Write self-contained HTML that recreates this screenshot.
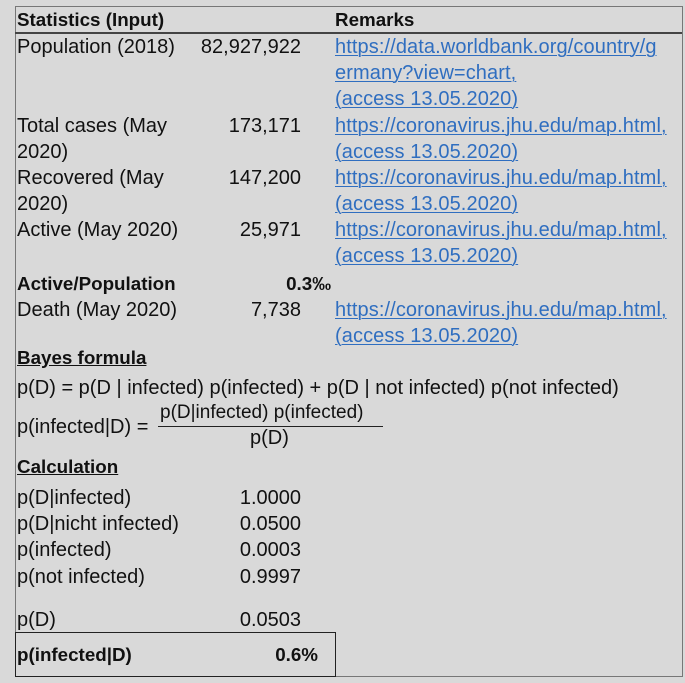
<!DOCTYPE html>
<html><head><meta charset="utf-8"><style>
body{margin:0;width:685px;height:683px;background:#d9d9d9;position:relative;overflow:hidden;font-family:"Liberation Sans",sans-serif;font-size:20px;color:#111;}
.t{position:absolute;line-height:26px;white-space:nowrap;}
.r{text-align:right;}
.l{color:#2f6ec0;text-decoration:underline;text-decoration-thickness:1px;text-underline-offset:2px;letter-spacing:0.1px;}
b{font-weight:bold;}
.bb{font-size:18.8px;font-weight:bold;}
.u{text-decoration:underline;}
</style></head><body>
<div style="position:absolute;left:15px;top:6px;width:666px;height:669px;border:1px solid #777;"></div>
<div style="position:absolute;left:15px;top:32px;width:667px;height:2px;background:#444;"></div>
<div style="position:absolute;left:15px;top:632px;width:319px;height:43px;border:1.5px solid #222;"></div>

<div class="t bb" style="left:17px;top:7px">Statistics (Input)</div>
<div class="t bb" style="left:335px;top:7px">Remarks</div>

<div class="t" style="left:17px;top:34px">Population (2018)</div>
<div class="t r" style="right:384px;top:34px">82,927,922</div>
<div class="t l" style="left:335px;top:34px">https://data.worldbank.org/country/g</div>
<div class="t l" style="left:335px;top:60px">ermany?view=chart,</div>
<div class="t l" style="left:335px;top:86px">(access 13.05.2020)</div>

<div class="t" style="left:17px;top:113px">Total cases (May</div>
<div class="t" style="left:17px;top:139px">2020)</div>
<div class="t r" style="right:384px;top:113px">173,171</div>
<div class="t l" style="left:335px;top:113px">https://coronavirus.jhu.edu/map.html,</div>
<div class="t l" style="left:335px;top:139px">(access 13.05.2020)</div>

<div class="t" style="left:17px;top:165px">Recovered (May</div>
<div class="t" style="left:17px;top:191px">2020)</div>
<div class="t r" style="right:384px;top:165px">147,200</div>
<div class="t l" style="left:335px;top:165px">https://coronavirus.jhu.edu/map.html,</div>
<div class="t l" style="left:335px;top:191px">(access 13.05.2020)</div>

<div class="t" style="left:17px;top:217px">Active (May 2020)</div>
<div class="t r" style="right:384px;top:217px">25,971</div>
<div class="t l" style="left:335px;top:217px">https://coronavirus.jhu.edu/map.html,</div>
<div class="t l" style="left:335px;top:243px">(access 13.05.2020)</div>

<div class="t bb" style="left:17px;top:271px">Active/Population</div>
<div class="t r bb" style="right:354px;top:271px">0.3‰</div>

<div class="t" style="left:17px;top:297px">Death (May 2020)</div>
<div class="t r" style="right:384px;top:297px">7,738</div>
<div class="t l" style="left:335px;top:297px">https://coronavirus.jhu.edu/map.html,</div>
<div class="t l" style="left:335px;top:323px">(access 13.05.2020)</div>

<div class="t u bb" style="left:17px;top:345px">Bayes formula</div>
<div class="t" style="left:17px;top:375px">p(D) = p(D | infected) p(infected) + p(D | not infected) p(not infected)</div>
<div class="t" style="left:17px;top:414px">p(infected|D) =</div>
<div class="t" style="left:160px;top:400px;font-size:19px">p(D|infected) p(infected)</div>
<div style="position:absolute;left:158px;top:426px;width:225px;height:1px;background:#222"></div>
<div class="t" style="left:250px;top:425px">p(D)</div>

<div class="t u bb" style="left:17px;top:454px">Calculation</div>
<div class="t" style="left:17px;top:485px">p(D|infected)</div>
<div class="t r" style="right:384px;top:485px">1.0000</div>
<div class="t" style="left:17px;top:511px">p(D|nicht infected)</div>
<div class="t r" style="right:384px;top:511px">0.0500</div>
<div class="t" style="left:17px;top:537px">p(infected)</div>
<div class="t r" style="right:384px;top:537px">0.0003</div>
<div class="t" style="left:17px;top:564px">p(not infected)</div>
<div class="t r" style="right:384px;top:564px">0.9997</div>
<div class="t" style="left:17px;top:607px">p(D)</div>
<div class="t r" style="right:384px;top:607px">0.0503</div>
<div class="t bb" style="left:17px;top:642px">p(infected|D)</div>
<div class="t r bb" style="right:367px;top:642px">0.6%</div>
</body></html>
